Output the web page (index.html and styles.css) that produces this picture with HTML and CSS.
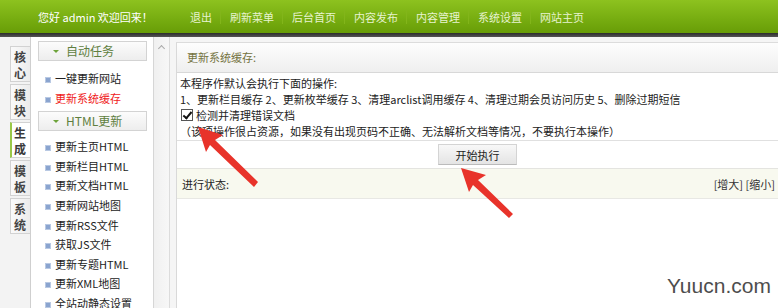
FILE: index.html
```html
<!DOCTYPE html>
<html lang="zh">
<head>
<meta charset="utf-8">
<link rel="stylesheet" href="styles.css">
</head>
<body>
<div class="header">
  <div class="welcome">您好 admin 欢迎回来！</div>
  <ul class="nav">
    <li>退出</li>
    <li>刷新菜单</li>
    <li>后台首页</li>
    <li>内容发布</li>
    <li>内容管理</li>
    <li>系统设置</li>
    <li>网站主页</li>
  </ul>
</div>
<div class="stripe"></div>
<div class="main">
  <div class="tabs">
    <div class="tab">核心</div>
    <div class="tab">模块</div>
    <div class="tab active">生成</div>
    <div class="tab">模板</div>
    <div class="tab">系统</div>
  </div>
  <div class="menu">
    <div class="group"><span class="caret"></span>自动任务</div>
    <ul class="items first">
      <li>一键更新网站</li>
      <li class="current">更新系统缓存</li>
    </ul>
    <div class="group"><span class="caret"></span>HTML更新</div>
    <ul class="items">
      <li>更新主页HTML</li>
      <li>更新栏目HTML</li>
      <li>更新文档HTML</li>
      <li>更新网站地图</li>
      <li>更新RSS文件</li>
      <li>获取JS文件</li>
      <li>更新专题HTML</li>
      <li>更新XML地图</li>
      <li>全站动静态设置</li>
    </ul>
  </div>
  <div class="scroll"><span class="up"></span></div>
  <div class="content">
    <div class="panel">
      <div class="panel-title">更新系统缓存:</div>
      <div class="panel-body">
        <p>本程序作默认会执行下面的操作:</p>
        <p>1、更新栏目缓存 2、更新枚举缓存 3、清理arclist调用缓存 4、清理过期会员访问历史 5、删除过期短信</p>
        <p class="check"><span class="box"></span>检测并清理错误文档</p>
        <p>（该项操作很占资源，如果没有出现页码不正确、无法解析文档等情况，不要执行本操作）</p>
      </div>
      <div class="actions"><button class="btn">开始执行</button></div>
      <div class="status"><span>进行状态:</span><span class="zoom">[增大] [缩小]</span></div>
    </div>
  </div>
</div>
<svg class="arrows" width="778" height="308" viewBox="0 0 778 308">
  <polygon points="198,127 223,135 215,140 258,182 254,187 210,145 206,152" fill="#e8332a"/>
  <polygon points="461,168 486,175 478,180 513,214 509,218 473,185 469,192" fill="#e8332a"/>
</svg>
<div class="watermark">Yuucn.com</div>
</body>
</html>
```

FILE: styles.css
```css
* { box-sizing: border-box; margin: 0; padding: 0; }
html, body { width: 778px; height: 308px; overflow: hidden; }
body {
  font-family: "Noto Sans CJK SC", "Liberation Sans", sans-serif;
  font-size: 11px;
  color: #222;
  background: #fff;
  position: relative;
}
ul { list-style: none; }

.header {
  height: 33px;
  background: linear-gradient(#8dc21f, #76ac10 60%, #689d07);
  display: flex;
  align-items: center;
  color: #fff;
}
.welcome { width: 178px; padding-left: 38px; font-size: 11px; white-space: nowrap; }
.nav { display: flex; align-items: center; }
.nav li {
  color: #e7f3cf;
  padding: 0 8px 0 9px;
  border-left: 1px solid #82b51a;
  line-height: 14px;
  white-space: nowrap;
}
.nav li:first-child { border-left: none; padding-left: 12px; }
.stripe { height: 4px; background: linear-gradient(#2c2c2c, #555); }

.main {
  display: grid;
  grid-template-columns: 30px 124px 16px 1fr;
  height: 271px;
  background: #f3f3f3;
}
.tabs { padding: 9px 0 0 10px; display: flex; flex-direction: column; gap: 2px; }
.tab {
  width: 20px;
  height: 36px;
  border: 1px solid #d2d2d2;
  border-right: none;
  background: linear-gradient(90deg, #fafafa, #ececec);
  color: #444;
  font-weight: bold;
  font-size: 12px;
  line-height: 16px;
  padding: 2px 0 0 3px;
  word-break: break-all;
}
.tab.active { background: #fff; border-left: 2px solid #9ac848; padding-left: 2px; color: #3a3a3a; }

.menu {
  background: #fff;
  border-left: 1px solid #cfcfcf;
  border-right: 1px solid #d6d6d6;
  padding: 4px 6px 0 7px;
}
.group {
  height: 20px;
  border: 1px solid #d3d3d3;
  background: linear-gradient(#fcfcfc, #ededed);
  color: #5f7f3f;
  font-size: 12px;
  line-height: 18px;
  padding-left: 27px;
  position: relative;
}
.caret {
  position: absolute;
  left: 14px;
  top: 8px;
  border-left: 3px solid transparent;
  border-right: 3px solid transparent;
  border-top: 3px solid #6da33a;
}
.items { padding: 6px 0 5px 0; }
.items.first { padding: 8px 0 3px 0; }
.items li {
  height: 19.6px;
  line-height: 19px;
  padding-left: 17px;
  position: relative;
  color: #222;
  font-size: 11px;
  white-space: nowrap;
}
.items li::before {
  content: "";
  position: absolute;
  left: 7px;
  top: 8px;
  width: 4px;
  height: 4px;
  background: #8aa4cf;
  border: 1px solid #b9c9e3;
}
.items li.current { color: #f01a1a; }

.scroll {
  background: linear-gradient(90deg, #f0f0f0, #f7f7f7);
  border-right: 1px solid #dcdcdc;
  position: relative;
}
.up {
  position: absolute;
  left: 5px;
  top: 9px;
  width: 5px;
  height: 5px;
  border-left: 1px solid #aaa;
  border-top: 1px solid #aaa;
  transform: rotate(45deg);
}

.content { padding: 5px 0 0 6px; background: #f5f5f5; }
.panel { background: #fff; border-left: 1px solid #d9d9d9; border-top: 1px solid #dcdcdc; height: 100%; }
.panel-title {
  height: 30px;
  line-height: 28px;
  padding-left: 10px;
  background: linear-gradient(#fdfdfd, #efefef);
  border-bottom: 1px solid #d8d8d8;
  color: #74733f;
  font-size: 11px;
}
.panel-body { padding: 2px 0 0 3px; border-bottom: 1px solid #e0e0e0; height: 68px; }
.panel-body p { line-height: 16px; white-space: nowrap; color: #222; }
.check { display: flex; align-items: center; }
.box {
  width: 12px; height: 12px;
  border: 1px solid #555;
  margin: 0 3px 0 1px;
  position: relative;
  background: #fff;
}
.box::after {
  content: "";
  position: absolute;
  left: 3px; top: 0px;
  width: 3px; height: 7px;
  border-right: 2px solid #111;
  border-bottom: 2px solid #111;
  transform: rotate(40deg);
}
.actions { height: 27px; display: flex; justify-content: center; align-items: flex-start; padding-top: 3px; }
.btn {
  width: 79px;
  height: 21px;
  border: 1px solid #d4d4d4;
  border-bottom-color: #bbb;
  background: linear-gradient(#f8f8f8, #e4e4e4);
  font-family: "Noto Sans CJK SC", sans-serif;
  font-size: 11px;
  color: #222;
}
.status {
  height: 31px;
  background: #f8f9ef;
  border-top: 1px solid #e4e4e0;
  border-bottom: 1px solid #e8e8e4;
  display: flex;
  justify-content: space-between;
  align-items: center;
  padding: 0 3px 0 5px;
  color: #222;
}
.zoom { color: #333; }

.arrows { position: absolute; left: 0; top: 0; pointer-events: none; }
.watermark {
  position: absolute;
  left: 667px;
  top: 274px;
  font-family: "Liberation Sans", Arial, sans-serif;
  font-size: 21px;
  color: #3a3a3a;
  opacity: 0.9;
}
```
